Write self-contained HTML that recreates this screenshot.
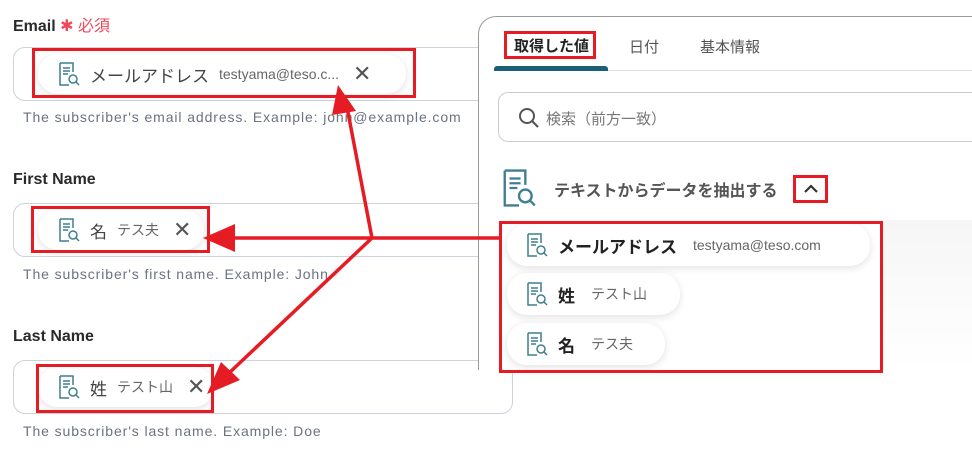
<!DOCTYPE html>
<html><head><meta charset="utf-8"><style>
*{margin:0;padding:0;box-sizing:border-box}
body{width:972px;height:467px;background:#fff;position:relative;overflow:hidden;font-family:"Liberation Sans","Noto Sans CJK JP",sans-serif;color:#2b2b2b}
.abs{position:absolute}
.lbl{font-size:16px;font-weight:bold;color:#2a2a2a}
.inp{position:absolute;border:1px solid #ccd2da;border-radius:12px;background:#fff}
.help{font-size:14px;color:#6b7280;position:absolute;letter-spacing:.9px}
.chip{position:absolute;height:40px;border-radius:20px;background:#fff;box-shadow:0 2px 8px rgba(0,0,0,.12);display:flex;align-items:center;font-size:17px;color:#444;white-space:nowrap}
.chip .v{font-size:14px;color:#666;margin-left:10px}
.x{font-size:22px;color:#555;margin-left:14px;font-weight:300}
.red{position:absolute;border:3px solid #e51c24}
.ic{width:22px;height:24px;margin:0 10px 0 0}
</style></head><body>
<svg width="0" height="0" style="position:absolute"><defs><symbol id="doc" viewBox="0 0 22 24"><path d="M2 1h13v9M2 1v22h9" fill="none" stroke="#3f7f91" stroke-width="1.5"/><path d="M5 6h7M5 9h7M5 12h5" stroke="#3f7f91" stroke-width="1.4"/><circle cx="15" cy="17" r="4" fill="none" stroke="#3f7f91" stroke-width="1.5"/><path d="M18 20l3 3" stroke="#3f7f91" stroke-width="1.5"/></symbol></defs></svg>

<div class="abs lbl" style="left:13px;top:12px">Email <span style="color:#f0485a;font-weight:normal">✱ 必須</span></div>
<div class="inp" style="left:13px;top:47px;width:520px;height:54px"></div>
<div class="chip" style="left:38px;top:54px;width:368px;padding-left:20px"><svg class="ic"><use href="#doc"/></svg>メールアドレス<span class="v">testyama@teso.c...</span><span class="x">✕</span></div>
<div class="help" style="left:23px;top:109px">The subscriber's email address. Example: john@example.com</div>

<div class="abs lbl" style="left:13px;top:171px">First Name</div>
<div class="inp" style="left:13px;top:203px;width:520px;height:54px"></div>
<div class="chip" style="left:38px;top:210px;width:166px;padding-left:20px"><svg class="ic"><use href="#doc"/></svg>名<span class="v">テス夫</span><span class="x">✕</span></div>
<div class="help" style="left:23px;top:266px">The subscriber's first name. Example: John</div>

<div class="abs lbl" style="left:13px;top:328px">Last Name</div>
<div class="inp" style="left:13px;top:360px;width:500px;height:54px"></div>
<div class="chip" style="left:38px;top:367px;width:176px;padding-left:20px"><svg class="ic"><use href="#doc"/></svg>姓<span class="v">テスト山</span><span class="x">✕</span></div>
<div class="help" style="left:23px;top:423px">The subscriber's last name. Example: Doe</div>

<div class="abs" style="left:478px;top:16px;width:520px;height:354px;border:1px solid #9a9a9a;border-radius:18px 0 0 0;background:#fff;border-bottom:none"></div>
<div class="abs" style="left:494px;top:17px;width:478px;height:353px;background:#fff"></div>
<div class="abs" style="left:494px;top:70px;width:478px;height:1px;background:#ddd"></div>
<div class="abs" style="left:494px;top:66px;width:114px;height:5px;background:#1a5f73;border-radius:3px 3px 0 0"></div>
<div class="abs" style="left:514px;top:35px;font-size:15px;font-weight:bold;color:#222">取得した値</div>
<div class="abs" style="left:629px;top:36px;font-size:15px;color:#555">日付</div>
<div class="abs" style="left:700px;top:36px;font-size:15px;color:#555">基本情報</div>
<div class="abs" style="left:498px;top:92px;width:490px;height:50px;border:1px solid #ccc;border-radius:10px"></div>
<svg class="abs" style="left:518px;top:107px" width="22" height="22"><circle cx="9" cy="9" r="7" fill="none" stroke="#555" stroke-width="2"/><path d="M14 14l6 6" stroke="#555" stroke-width="2.2"/></svg>
<div class="abs" style="left:546px;top:108px;font-size:15px;color:#777">検索（前方一致）</div>
<svg class="abs" style="left:501px;top:169px" width="36" height="38" viewBox="0 0 22 24"><use href="#doc"/></svg>
<div class="abs" style="left:554px;top:177px;font-size:16px;color:#555;font-weight:bold">テキストからデータを抽出する</div>
<svg class="abs" style="left:802px;top:181px" width="18" height="14"><path d="M3 11l6-6 6 6" fill="none" stroke="#333" stroke-width="2.2"/></svg>
<div class="abs" style="left:880px;top:220px;width:92px;height:150px;background:linear-gradient(#f6f6f6,#fff)"></div>
<div class="chip" style="left:507px;top:224px;width:363px;height:42px;padding-left:19px;font-weight:bold;color:#222"><svg class="ic"><use href="#doc"/></svg>メールアドレス<span class="v" style="font-weight:normal;margin-left:16px">testyama@teso.com</span></div>
<div class="chip" style="left:507px;top:273px;width:173px;height:42px;padding-left:19px;font-weight:bold;color:#222"><svg class="ic"><use href="#doc"/></svg>姓<span class="v" style="font-weight:normal;margin-left:16px">テスト山</span></div>
<div class="chip" style="left:507px;top:323px;width:158px;height:42px;padding-left:19px;font-weight:bold;color:#222"><svg class="ic"><use href="#doc"/></svg>名<span class="v" style="font-weight:normal;margin-left:16px">テス夫</span></div>

<div class="red" style="left:32px;top:48px;width:384px;height:50px"></div>
<div class="red" style="left:31px;top:206px;width:179px;height:47px"></div>
<div class="red" style="left:36px;top:364px;width:178px;height:49px"></div>
<div class="red" style="left:504px;top:31px;width:92px;height:28px"></div>
<div class="red" style="left:793px;top:175px;width:35px;height:28px"></div>
<div class="red" style="left:499px;top:221px;width:384px;height:152px"></div>

<svg class="abs" style="left:0;top:0" width="972" height="467">
<g stroke="#e51c24" stroke-width="3.5" fill="none"><path d="M499 238H230M372 238L346 102M372 238L228 374"/></g>
<g fill="#e51c24"><path d="M203 238l32-14v28z"/><path d="M338 85l18 26-24 4z"/><path d="M207 394l14-32 19 18z"/></g>
</svg>
</body></html>
